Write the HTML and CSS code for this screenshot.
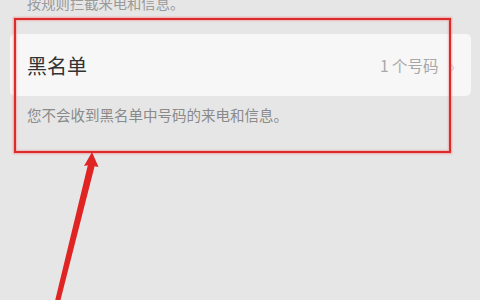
FILE: index.html
```html
<!DOCTYPE html>
<html lang="zh-CN">
<head>
<meta charset="utf-8">
<link rel="stylesheet" href="styles.css">
</head>
<body>
<div class="screen">
  <p class="intro">按规则拦截来电和信息。</p>
  <div class="card">
    <span class="card-title">黑名单</span>
    <span class="card-value">1 个号码<span class="chev">›</span></span>
  </div>
  <p class="note">您不会收到黑名单中号码的来电和信息。</p>
  <div class="highlight"></div>
  <svg class="arrow" width="480" height="300" viewBox="0 0 480 300">
    <polygon points="92,152 98.5,167 94.6,166.2 60,302 55,301 87.8,165.2 84,166" fill="#e02424"/>
  </svg>
</div>
</body>
</html>
```
FILE: styles.css
```css
html, body {
  margin: 0;
  padding: 0;
  background: #e6e6e6;
}
.screen {
  position: relative;
  width: 480px;
  height: 300px;
  overflow: hidden;
  font-family: "Noto Sans CJK SC", "Noto Sans", sans-serif;
}
.intro {
  margin: -6px 0 0 27px;
  font-size: 14.3px;
  line-height: 18px;
  color: #9a9a9a;
}
.card {
  margin: 22px 9px 0 10px;
  height: 62px;
  background: #f7f7f7;
  border-radius: 5px;
  display: flex;
  align-items: center;
  justify-content: space-between;
  padding: 0 16px 0 17px;
}
.card-title {
  font-size: 20px;
  color: #333;
}
.card-value {
  font-size: 15.5px;
  color: #a8a8a8;
  display: flex;
  align-items: center;
  gap: 11px;
}
.chev {
  font-size: 18px;
  color: #d4d4d4;
}
.note {
  margin: 10px 0 0 27px;
  font-size: 14.5px;
  line-height: 18px;
  color: #8a8a8a;
}
.highlight {
  position: absolute;
  left: 14px;
  top: 18px;
  width: 433px;
  height: 131px;
  border: 2.5px solid #dd2a2a;
  box-shadow: 0 0 1.5px 1px rgba(240, 120, 120, 0.55), inset 0 0 1.5px 1px rgba(240, 120, 120, 0.45);
}
.arrow {
  position: absolute;
  left: 0;
  top: 0;
}
```
